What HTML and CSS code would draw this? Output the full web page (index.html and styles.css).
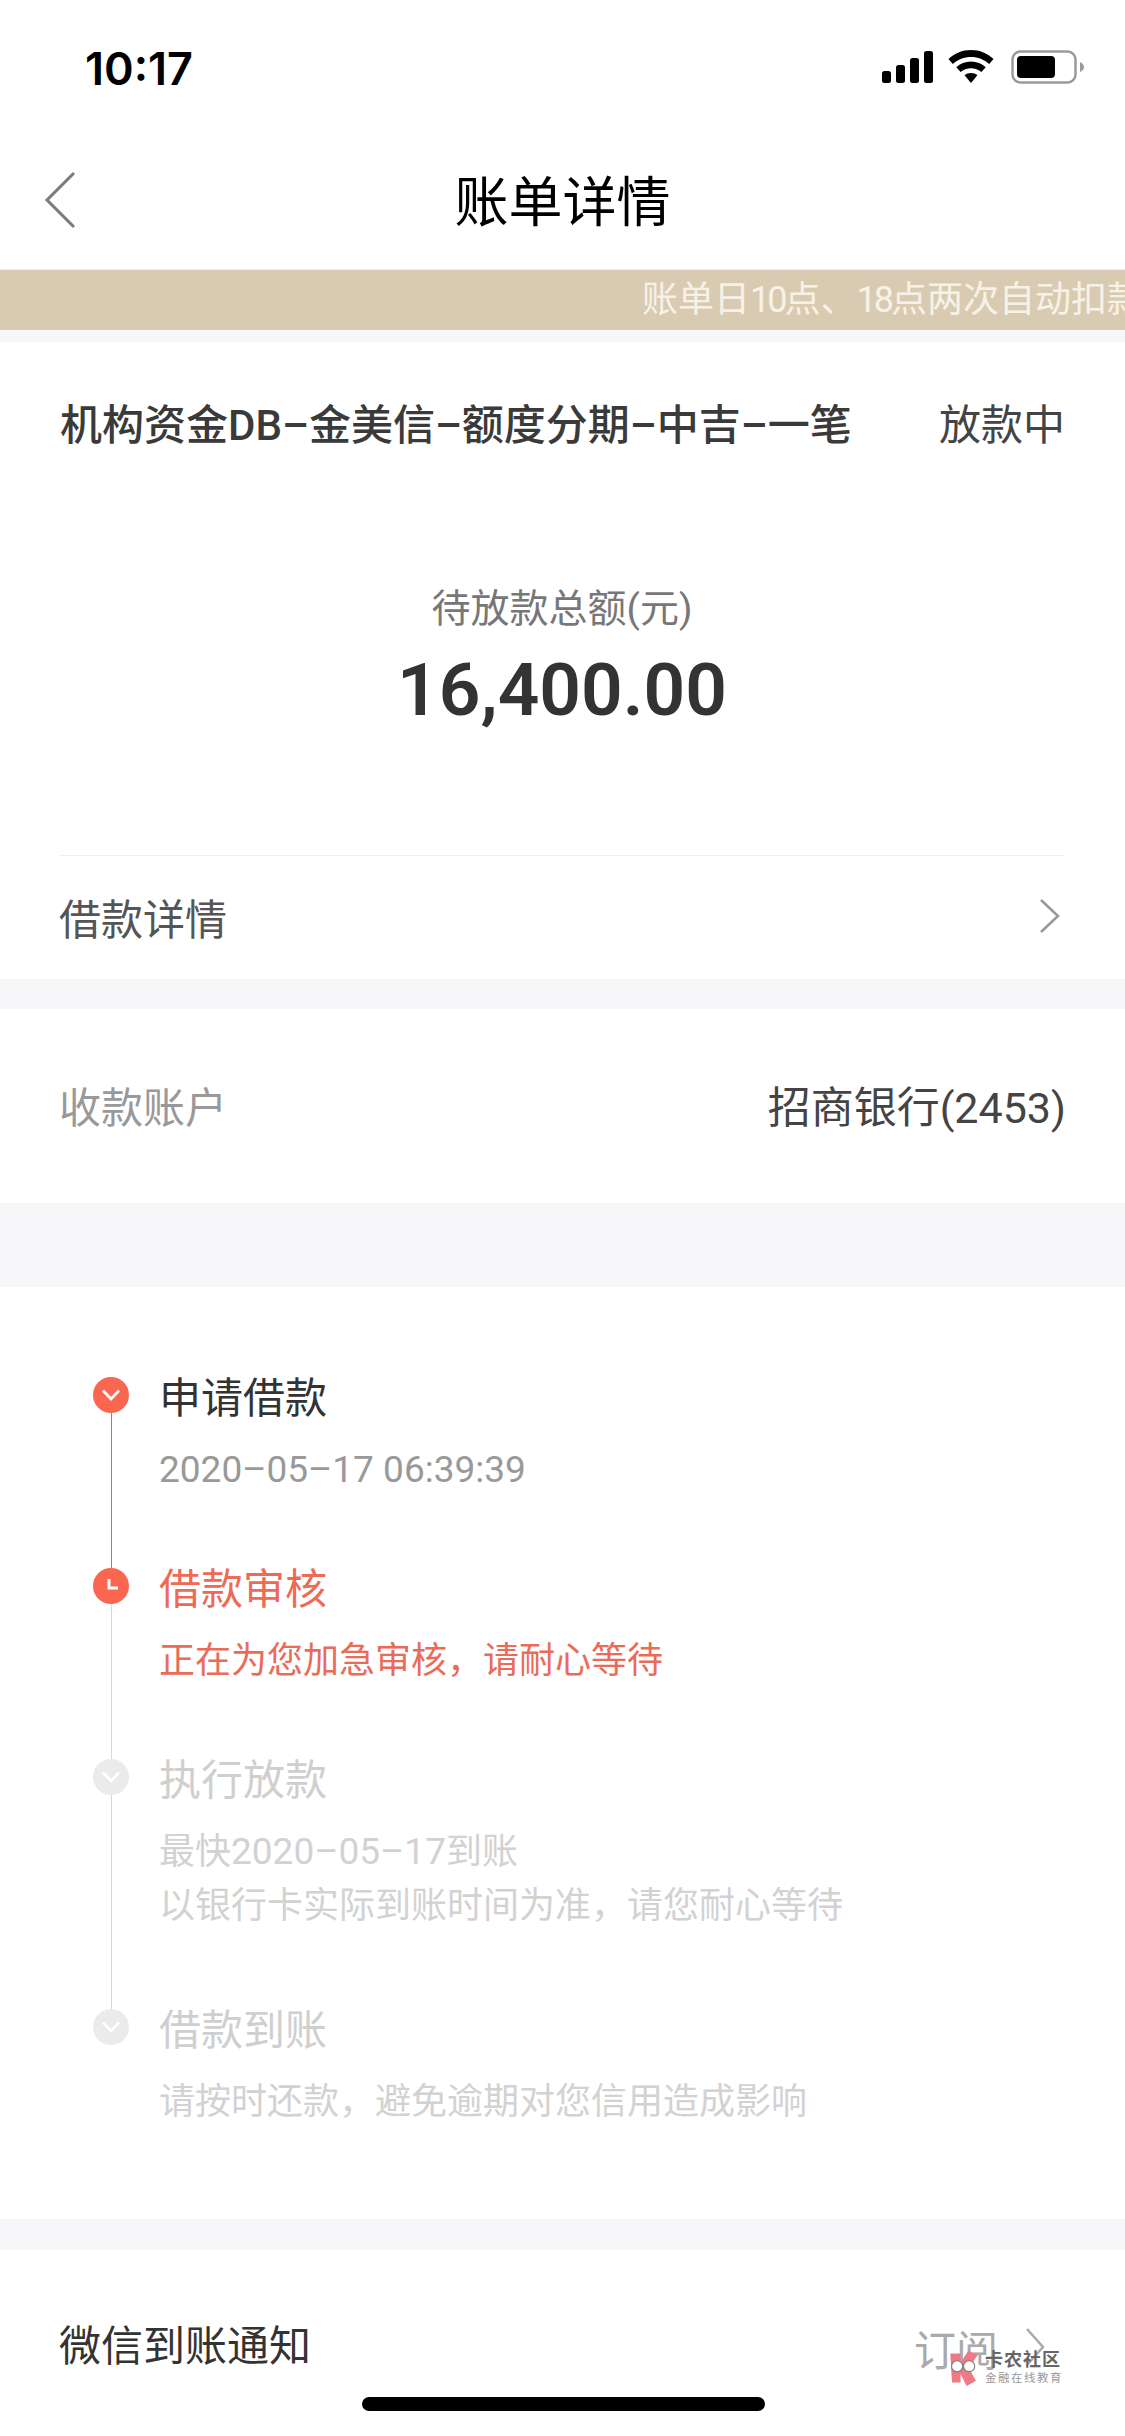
FILE: index.html
```html
<!DOCTYPE html>
<html lang="zh-CN">
<head>
    <meta charset="UTF-8">
    <meta name="viewport" content="width=device-width, initial-scale=1.0">
    <title>账单详情</title>
    <link rel="stylesheet" href="styles.css">
</head>
<body>
<div class="page">

    <div class="status-bar">
        <span class="clock">10:17</span>
        <div class="status-icons">
            <svg class="signal" width="52" height="32" viewBox="0 0 52 32"><rect x="0" y="20" width="9" height="12" rx="2.5"/><rect x="14" y="14" width="9" height="18" rx="2.5"/><rect x="28" y="7" width="9" height="25" rx="2.5"/><rect x="42" y="0" width="9" height="32" rx="2.5"/></svg>
            <svg width="46" height="34" viewBox="0 0 46 34"><path d="M23 0C14 0 6.500 3.400 0.500 9L4.800 14C9.700 9.500 16 6.900 23 6.900S36.300 9.500 41.200 14L45.500 9C39.500 3.400 32 0 23 0Z"/><path d="M23 11.500C17.300 11.500 12.200 13.700 8.300 17.200L12.600 22.100C15.400 19.700 19 18.300 23 18.300S30.600 19.700 33.400 22.100L37.700 17.200C33.800 13.700 28.700 11.500 23 11.500Z"/><path d="M23 23C20.500 23 18.300 23.900 16.600 25.300L23 33L29.400 25.300C27.700 23.900 25.500 23 23 23Z"/></svg>
            <svg width="74" height="34" viewBox="0 0 74 34"><rect x="1.500" y="1.500" width="63" height="31" rx="8" fill="none" stroke="#9a9a9a" stroke-width="2.500"/><rect x="6" y="6" width="38" height="22" rx="4"/><path d="M69 12c2.500 1 4 3 4 5s-1.500 4-4 5z" fill="#9a9a9a"/></svg>
        </div>
    </div>

    <div class="nav-bar">
        <svg class="nav-back" width="32" height="58" viewBox="0 0 32 58"><path d="M30 2L3 29L30 56" fill="none" stroke="#7a7a7a" stroke-width="3"/></svg>
        <span class="nav-title">账单详情</span>
    </div>

    <div class="notice"><span class="notice-text">账单日<span class="tight">10</span>点、<span class="tight">18</span>点两次自动扣款</span></div>

    <section class="summary">
        <div class="summary-head">
            <span class="product">机构资金DB–金美信–额度分期–中吉–一笔</span>
            <span class="state">放款中</span>
        </div>
        <div class="amount-label">待放款总额(元)</div>
        <div class="amount">16,400.00</div>
        <div class="row row-detail">
            <span>借款详情</span>
            <svg class="chevron" width="22" height="36" viewBox="0 0 22 36"><path d="M2 2L19 18L2 34" fill="none" stroke="#999" stroke-width="2.500"/></svg>
        </div>
    </section>

    <section class="account">
        <span class="account-label">收款账户</span>
        <span class="account-value">招商银行(2453)</span>
    </section>

    <section class="timeline">
        <div class="step step-done">
            <div class="rail">
                <svg class="dot" width="36" height="36" viewBox="0 0 36 36"><circle cx="18" cy="18" r="18" fill="#fb6650"/><path d="M10 13.500L18 22L26 13.500" fill="none" stroke="#fff" stroke-width="2.800"/></svg>
                <i class="rail-line"></i>
            </div>
            <div class="step-body">
                <div class="step-title">申请借款</div>
                <div class="step-desc"><span class="num">2020–05–17 06:39:39</span></div>
            </div>
        </div>
        <div class="step step-current">
            <div class="rail">
                <svg class="dot" width="36" height="36" viewBox="0 0 36 36"><circle cx="18" cy="18" r="18" fill="#fb6650"/><path d="M16 11V20H25" fill="none" stroke="#fff" stroke-width="3"/></svg>
                <i class="rail-line"></i>
            </div>
            <div class="step-body">
                <div class="step-title">借款审核</div>
                <div class="step-desc">正在为您加急审核，请耐心等待</div>
            </div>
        </div>
        <div class="step step-todo step-long">
            <div class="rail">
                <svg class="dot" width="36" height="36" viewBox="0 0 36 36"><circle cx="18" cy="18" r="18" fill="#ebebeb"/><path d="M10 13.500L18 22L26 13.500" fill="none" stroke="#fff" stroke-width="2.800"/></svg>
                <i class="rail-line"></i>
            </div>
            <div class="step-body">
                <div class="step-title">执行放款</div>
                <div class="step-desc">最快<span class="num">2020–05–17</span>到账<br>以银行卡实际到账时间为准，请您耐心等待</div>
            </div>
        </div>
        <div class="step step-todo step-last">
            <div class="rail">
                <svg class="dot" width="36" height="36" viewBox="0 0 36 36"><circle cx="18" cy="18" r="18" fill="#ebebeb"/><path d="M10 13.500L18 22L26 13.500" fill="none" stroke="#fff" stroke-width="2.800"/></svg>
            </div>
            <div class="step-body">
                <div class="step-title">借款到账</div>
                <div class="step-desc">请按时还款，避免逾期对您信用造成影响</div>
            </div>
        </div>
    </section>

    <section class="wechat">
        <span class="wechat-label">微信到账通知</span>
        <div class="wechat-right">
            <span>订阅</span>
            <svg width="20" height="40" viewBox="0 0 20 40"><path d="M2 2L18 20L2 38" fill="none" stroke="#aaa" stroke-width="2.500"/></svg>
        </div>
    </section>

    <div class="watermark">
        <svg width="34" height="36" viewBox="0 0 34 42"><path d="M1 4H13V15L22 1L33 6L22 20L31 36L20 42L13 28V38H3Z" fill="#ee7a86"/><circle cx="9" cy="19" r="6.500" fill="#fff" stroke="#777" stroke-width="1.200"/><circle cx="23" cy="19" r="6.500" fill="#fff" stroke="#777" stroke-width="1.200"/></svg>
        <div class="watermark-text">
            <b>卡农社区</b>
            <span>金融在线教育</span>
        </div>
    </div>

    <div class="home-indicator"></div>
</div>
</body>
</html>
```

FILE: styles.css
```css
html, body {
    margin: 0;
    padding: 0;
    background: #fff;
}
.page {
    position: relative;
    width: 1125px;
    height: 2436px;
    overflow: hidden;
    font-family: Roboto, "Noto Sans CJK SC", sans-serif;
    color: #333;
}

/* status bar */
.status-bar {
    height: 136px;
    box-sizing: border-box;
    padding: 46px 40px 0 85px;
    display: flex;
    justify-content: space-between;
    align-items: flex-start;
}
.clock {
    font-family: Inter, sans-serif;
    font-size: 45px;
    line-height: 46px;
    font-weight: 600;
    color: #000;
}
.status-icons {
    display: flex;
    align-items: center;
    gap: 17px;
    padding-top: 4px;
}
.signal {
    margin-right: -3px;
}

/* nav */
.nav-bar {
    position: relative;
    height: 134px;
    display: flex;
    align-items: center;
    justify-content: center;
    border-bottom: 1px solid #eee;
    box-sizing: border-box;
}
.nav-back {
    position: absolute;
    left: 44px;
    top: 35px;
}
.nav-title {
    font-size: 54px;
    color: #000;
    margin-top: -8px;
}
.notice {
    height: 60px;
    background: #d9cbb2;
    padding-left: 642px;
    overflow: hidden;
    white-space: nowrap;
    box-sizing: border-box;
}
.notice-text {
    font-size: 36px;
    line-height: 60px;
    color: #f7f2e8;
}
.tight {
    letter-spacing: -3px;
}

/* summary card */
.summary {
    margin-top: 12px;
    padding: 0 60px 0 59px;
    height: 637px;
    box-sizing: border-box;
    box-shadow: 0 -12px 0 #f7f7f9;
}
.summary-head {
    display: flex;
    justify-content: space-between;
    align-items: center;
    height: 158px;
}
.product {
    font-size: 42px;
    font-weight: 500;
    color: #3a3a3a;
    padding-left: 1px;
}
.state {
    font-size: 42px;
    color: #444;
}
.amount-label {
    margin-top: 81px;
    text-align: center;
    font-size: 39px;
    line-height: 56px;
    color: #777;
}
.amount {
    margin-top: 3px;
    text-align: center;
    font-size: 73px;
    line-height: 100px;
    font-weight: 600;
    color: #333;
}
.row-detail {
    margin-top: 115px;
    height: 120px;
    border-top: 1px solid #f0f0f0;
    display: flex;
    justify-content: space-between;
    align-items: center;
    font-size: 42px;
    color: #555;
}
.chevron {
    margin-right: 4px;
}

/* account */
.account {
    border-top: 30px solid #f7f7f9;
    border-bottom: 84px solid #f7f7f9;
    padding: 0 59px 4px;
    height: 190px;
    display: flex;
    justify-content: space-between;
    align-items: center;
    font-size: 42px;
}
.account-label {
    color: #999;
}
.account-value {
    font-size: 43px;
    color: #444;
}

/* steps */
.timeline {
    padding: 90px 0 0 93px;
    height: 932px;
    box-sizing: border-box;
}
.step {
    display: flex;
    height: 191px;
}
.step-long {
    height: 250px;
}
.step-last {
    height: auto;
}
.rail {
    width: 36px;
    display: flex;
    flex-direction: column;
    align-items: center;
    flex-shrink: 0;
}
.dot {
    display: block;
    flex-shrink: 0;
}
.rail-line {
    flex: 1;
    width: 1px;
    background: #d8d8d8;
}
.step-done .rail-line {
    background: #b87a6c;
}
.step-body {
    margin-left: 30px;
}
.step-title {
    font-size: 42px;
    line-height: 60px;
    margin-top: -8px;
}
.step-desc {
    margin-top: 14px;
    font-size: 36px;
    line-height: 54px;
}
.num {
    font-size: 37px;
}
.step-done .step-title {
    color: #333;
}
.step-done .step-desc {
    color: #999;
}
.step-current .step-title {
    color: #ee6a55;
}
.step-current .step-desc {
    color: #e96b58;
}
.step-todo .step-title {
    color: #cfcfcf;
}
.step-todo .step-desc {
    color: #d2d2d2;
}

/* bottom row */
.wechat {
    border-top: 31px solid #f7f7f9;
    padding: 0 80px 0 59px;
    height: 180px;
    display: flex;
    justify-content: space-between;
    align-items: flex-start;
    font-size: 42px;
}
.wechat-label {
    line-height: 194px;
    color: #333;
}
.wechat-right {
    display: flex;
    align-items: center;
    gap: 27px;
    height: 194px;
    color: #aaa;
}

/* overlays */
.watermark {
    position: absolute;
    left: 947px;
    top: 2350px;
    display: flex;
    gap: 4px;
}
.watermark-text {
    display: flex;
    flex-direction: column;
}
.watermark-text b {
    font-size: 18px;
    line-height: 20px;
    font-weight: 700;
    color: #666;
    letter-spacing: 1px;
}
.watermark-text span {
    font-size: 11.500px;
    line-height: 16px;
    color: #999;
    letter-spacing: 1.500px;
}
.home-indicator {
    position: absolute;
    left: 362px;
    top: 2397px;
    width: 403px;
    height: 14px;
    border-radius: 7px;
    background: #000;
}
```
